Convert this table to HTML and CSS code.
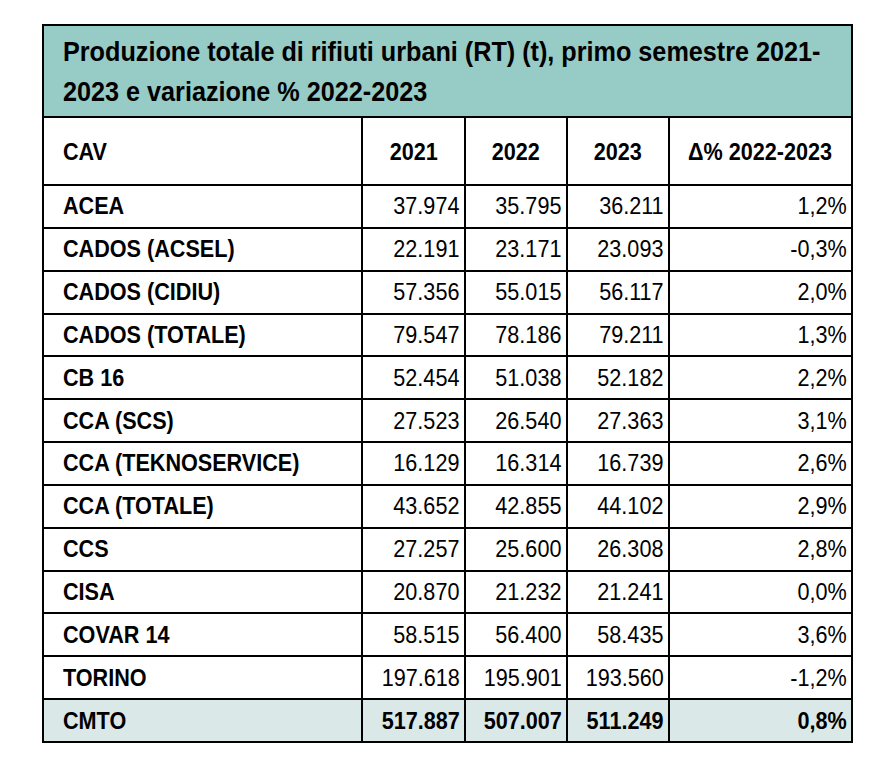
FILE: index.html
```html
<!DOCTYPE html>
<html lang="it">
<head>
<meta charset="utf-8">
<title>Produzione totale di rifiuti urbani</title>
<link rel="stylesheet" href="styles.css">
</head>
<body>
<div class="page">
<table class="tbl">
  <colgroup>
    <col class="c-name"><col class="c-num"><col class="c-num"><col class="c-num"><col class="c-var">
  </colgroup>
  <thead>
    <tr class="title-row"><th colspan="5" class="title"><div class="title-clip"><span class="title-text">Produzione totale di rifiuti urbani (RT) (t), primo semestre 2021-<br>2023 e variazione % 2022-2023</span></div></th></tr>
    <tr class="head-row"><th class="h-name"><span class="t">CAV</span></th><th><span class="t">2021</span></th><th><span class="t">2022</span></th><th><span class="t">2023</span></th><th><span class="t">&Delta;% 2022-2023</span></th></tr>
  </thead>
  <tbody>
    <tr><td class="name"><span class="t">ACEA</span></td><td><span class="t">37.974</span></td><td><span class="t">35.795</span></td><td><span class="t">36.211</span></td><td><span class="t">1,2%</span></td></tr>
    <tr><td class="name"><span class="t">CADOS (ACSEL)</span></td><td><span class="t">22.191</span></td><td><span class="t">23.171</span></td><td><span class="t">23.093</span></td><td><span class="t">-0,3%</span></td></tr>
    <tr><td class="name"><span class="t">CADOS (CIDIU)</span></td><td><span class="t">57.356</span></td><td><span class="t">55.015</span></td><td><span class="t">56.117</span></td><td><span class="t">2,0%</span></td></tr>
    <tr><td class="name"><span class="t">CADOS (TOTALE)</span></td><td><span class="t">79.547</span></td><td><span class="t">78.186</span></td><td><span class="t">79.211</span></td><td><span class="t">1,3%</span></td></tr>
    <tr><td class="name"><span class="t">CB 16</span></td><td><span class="t">52.454</span></td><td><span class="t">51.038</span></td><td><span class="t">52.182</span></td><td><span class="t">2,2%</span></td></tr>
    <tr><td class="name"><span class="t">CCA (SCS)</span></td><td><span class="t">27.523</span></td><td><span class="t">26.540</span></td><td><span class="t">27.363</span></td><td><span class="t">3,1%</span></td></tr>
    <tr><td class="name"><span class="t">CCA (TEKNOSERVICE)</span></td><td><span class="t">16.129</span></td><td><span class="t">16.314</span></td><td><span class="t">16.739</span></td><td><span class="t">2,6%</span></td></tr>
    <tr><td class="name"><span class="t">CCA (TOTALE)</span></td><td><span class="t">43.652</span></td><td><span class="t">42.855</span></td><td><span class="t">44.102</span></td><td><span class="t">2,9%</span></td></tr>
    <tr><td class="name"><span class="t">CCS</span></td><td><span class="t">27.257</span></td><td><span class="t">25.600</span></td><td><span class="t">26.308</span></td><td><span class="t">2,8%</span></td></tr>
    <tr><td class="name"><span class="t">CISA</span></td><td><span class="t">20.870</span></td><td><span class="t">21.232</span></td><td><span class="t">21.241</span></td><td><span class="t">0,0%</span></td></tr>
    <tr><td class="name"><span class="t">COVAR 14</span></td><td><span class="t">58.515</span></td><td><span class="t">56.400</span></td><td><span class="t">58.435</span></td><td><span class="t">3,6%</span></td></tr>
    <tr><td class="name"><span class="t">TORINO</span></td><td><span class="t">197.618</span></td><td><span class="t">195.901</span></td><td><span class="t">193.560</span></td><td><span class="t">-1,2%</span></td></tr>
    <tr class="total"><td class="name"><span class="t">CMTO</span></td><td><span class="t">517.887</span></td><td><span class="t">507.007</span></td><td><span class="t">511.249</span></td><td><span class="t">0,8%</span></td></tr>
  </tbody>
</table>
</div>
</body>
</html>
```
FILE: styles.css
```css
html, body {
  margin: 0;
  padding: 0;
  background: #ffffff;
}
.page {
  padding: 24px 0 0 42px;
}
.tbl {
  border-collapse: collapse;
  table-layout: fixed;
  width: 811px;
  font-family: "Liberation Sans", Arial, sans-serif;
  font-size: 24px;
  color: #000;
}
.c-name { width: 319px; }
.c-num { width: 102px; }
.c-var { width: 183px; }
.tbl th, .tbl td {
  border: 2px solid #000;
  padding: 0;
  vertical-align: middle;
}
.t {
  display: inline-block;
  white-space: nowrap;
  transform: scaleX(0.9);
  transform-origin: right center;
}
.title-row th {
  background: #97cbc5;
  height: 88px;
  text-align: left;
  font-weight: bold;
  padding: 2px 0 0 19px;
}
.title-clip {
  overflow: hidden;
  width: 100%;
}
.title-text {
  display: inline-block;
  white-space: nowrap;
  font-size: 28px;
  line-height: 40px;
  transform: scaleX(0.9);
  transform-origin: left center;
}
.head-row th {
  height: 64px;
  padding-top: 2px;
  font-weight: bold;
  text-align: center;
}
.head-row th .t {
  transform-origin: center center;
}
.head-row .h-name {
  text-align: left;
  padding-left: 19px;
}
.head-row .h-name .t {
  transform-origin: left center;
}
.tbl td {
  height: 40.85px;
  text-align: right;
  padding-right: 4px;
}
.tbl td.name {
  text-align: left;
  font-weight: bold;
  padding-left: 19px;
}
.tbl td.name .t {
  transform-origin: left center;
}
.total td {
  background: #dae8e7;
  font-weight: bold;
}
```
